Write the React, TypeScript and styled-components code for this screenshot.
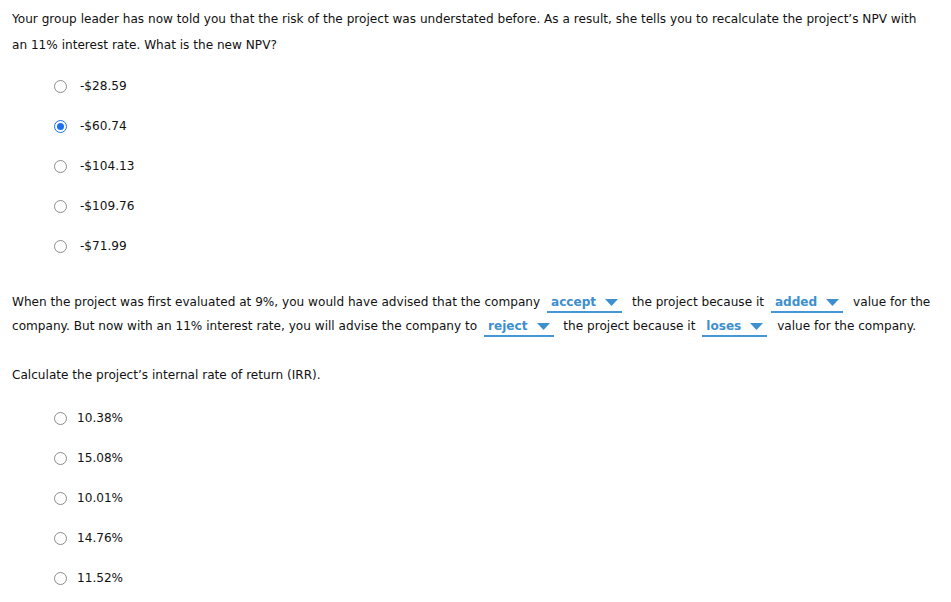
import React from 'react';
import styled, { createGlobalStyle } from 'styled-components';

const GlobalStyle = createGlobalStyle`
  body {
    margin: 0;
    background: #ffffff;
    font-family: "DejaVu Sans", Verdana, sans-serif;
    color: #111111;
  }
`;

const Page = styled.div`
  padding: 6px 0 0 12px;
  font-size: 12.1px;
`;

const Text = styled.p<{ $lh: number; $top: number }>`
  margin: ${(p) => p.$top}px 0 0 0;
  line-height: ${(p) => p.$lh}px;
  white-space: nowrap;
`;

const OptionList = styled.div<{ $top: number }>`
  margin-top: ${(p) => p.$top}px;
  display: flex;
  flex-direction: column;
`;

const OptionRow = styled.label<{ $gap: number }>`
  height: 40px;
  display: flex;
  align-items: center;
  gap: ${(p) => p.$gap}px;
  padding-left: 42px;
`;

const Radio = styled.span<{ $checked?: boolean }>`
  box-sizing: border-box;
  width: 13px;
  height: 13px;
  border-radius: 50%;
  border: ${(p) => (p.$checked ? '1.5px solid #1e6ff0' : '1px solid #8d8d8d')};
  background: #fff;
  display: flex;
  align-items: center;
  justify-content: center;
  &::after {
    content: '';
    display: ${(p) => (p.$checked ? 'block' : 'none')};
    width: 7px;
    height: 7px;
    border-radius: 50%;
    background: #1e6ff0;
  }
`;

const Dropdown = styled.span`
  display: inline-flex;
  align-items: center;
  gap: 9px;
  margin: 0 6px 0 3px;
  padding: 0 4px 0 4px;
  line-height: 18px;
  border-bottom: 2px solid #4596d4;
  color: #3d8fce;
  font-weight: bold;
`;

const Caret = () => (
  <svg width="13" height="7" viewBox="0 0 13 7">
    <polygon points="0,0 13,0 6.5,7" fill="#3d8fce" />
  </svg>
);

const Select = ({ value }: { value: string }) => (
  <Dropdown>
    {value}
    <Caret />
  </Dropdown>
);

const npv = ['-$28.59', '-$60.74', '-$104.13', '-$109.76', '-$71.99'];
const irr = ['10.38%', '15.08%', '10.01%', '14.76%', '11.52%'];

export default function App() {
  return (
    <>
      <GlobalStyle />
      <Page>
        <Text $lh={26} $top={0}>
          Your group leader has now told you that the risk of the project was understated before. As a result, she tells you to recalculate the project’s NPV with
          <br />
          an 11% interest rate. What is the new NPV?
        </Text>
        <OptionList $top={8}>
          {npv.map((v, i) => (
            <OptionRow key={v} $gap={13}>
              <Radio $checked={i === 1} />
              {v}
            </OptionRow>
          ))}
        </OptionList>
        <Text $lh={24} $top={24}>
          When the project was first evaluated at 9%, you would have advised that the company <Select value="accept" /> the project because it <Select value="added" /> value for the
          <br />
          company. But now with an 11% interest rate, you will advise the company to <Select value="reject" /> the project because it <Select value="loses" /> value for the company.
        </Text>
        <Text $lh={24} $top={25}>
          Calculate the project’s internal rate of return (IRR).
        </Text>
        <OptionList $top={11}>
          {irr.map((v) => (
            <OptionRow key={v} $gap={10}>
              <Radio />
              {v}
            </OptionRow>
          ))}
        </OptionList>
      </Page>
    </>
  );
}
